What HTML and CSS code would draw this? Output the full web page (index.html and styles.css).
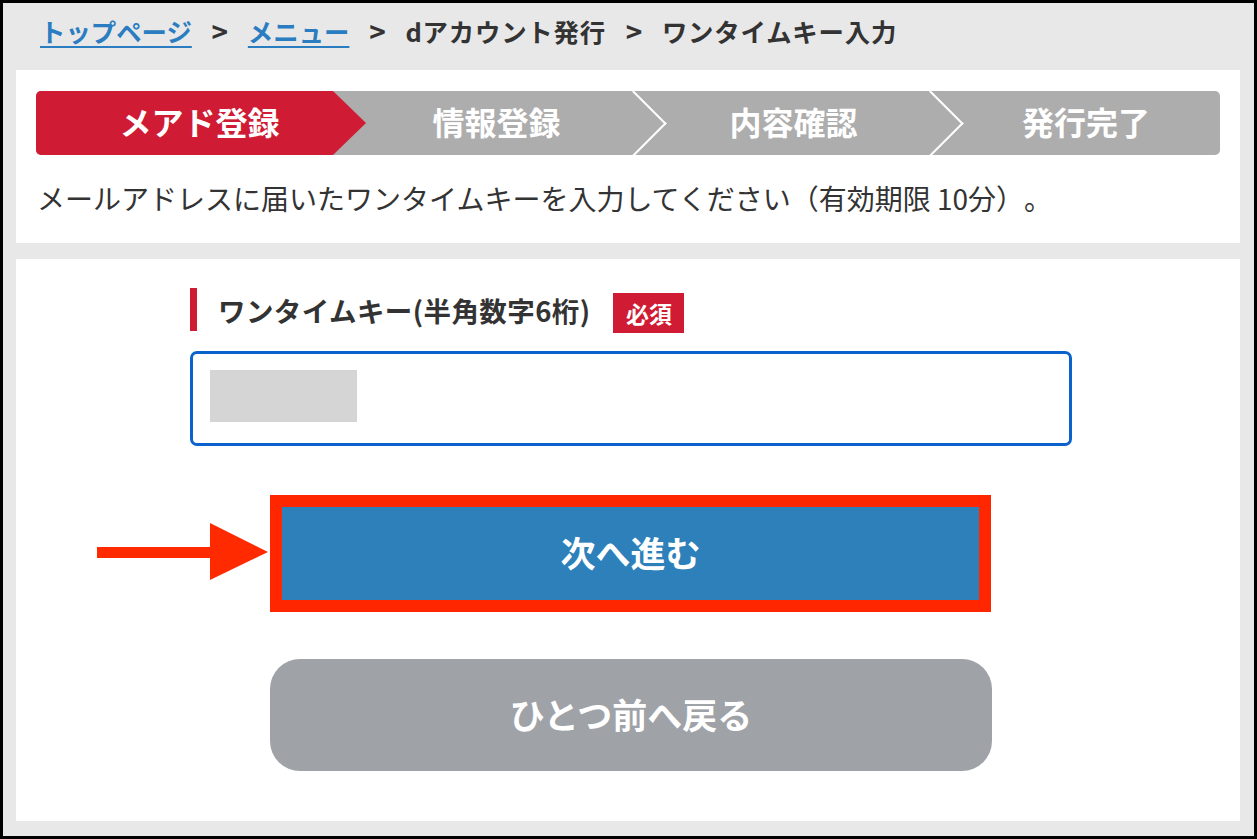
FILE: index.html
```html
<!DOCTYPE html>
<html lang="ja">
<head>
<meta charset="utf-8">
<title>ワンタイムキー入力</title>
<link rel="stylesheet" href="styles.css">
</head>
<body>
<div class="screen">
  <nav class="crumbs">
    <a class="crumb-link" href="#">トップページ</a><span class="sep">&gt;</span><a class="crumb-link" href="#">メニュー</a><span class="sep">&gt;</span><span class="crumb">dアカウント発行</span><span class="sep">&gt;</span><span class="crumb">ワンタイムキー入力</span>
  </nav>
  <section class="panel intro">
    <ol class="steps">
      <li class="step active">メアド登録</li>
      <li class="step chev">情報登録</li>
      <li class="step chev">内容確認</li>
      <li class="step">発行完了</li>
    </ol>
    <p class="desc">メールアドレスに届いたワンタイムキーを入力してください（有効期限 10分）。</p>
  </section>
  <section class="panel form">
    <div class="field">
      <div class="label"><span class="label-text">ワンタイムキー(半角数字6桁)</span><span class="badge">必須</span></div>
      <div class="input"><span class="mask"></span></div>
    </div>
    <div class="actions">
      <div class="highlight"><button class="btn next" type="button">次へ進む</button></div>
      <button class="btn back" type="button">ひとつ前へ戻る</button>
    </div>
    <svg class="pointer" width="172" height="58" viewBox="0 0 172 58" aria-hidden="true">
      <rect x="0" y="24" width="116" height="11" fill="#ff2a00"/>
      <polygon points="113,0 171,29 113,57" fill="#ff2a00"/>
    </svg>
  </section>
</div>
</body>
</html>
```
FILE: styles.css
```css
* { box-sizing: border-box; }
html, body { margin: 0; padding: 0; }
body {
  font-family: "Noto Sans CJK JP", "Noto Sans", sans-serif;
  color: #333;
  text-spacing-trim: space-all;
}
.screen {
  width: 1257px;
  height: 839px;
  border: 3px solid #000;
  background: #e8e8e8;
  padding: 0 14px 0 13px;
  display: flex;
  flex-direction: column;
}
.crumbs {
  height: 67px;
  padding: 10px 0 0 24px;
  font-size: 25.4px;
  font-weight: 700;
  line-height: 36px;
  display: flex;
  align-items: flex-start;
  white-space: nowrap;
}
.crumb-link {
  color: #2a7dc1;
  text-decoration: underline;
  text-decoration-thickness: 2px;
  text-underline-offset: 4px;
}
.crumb { color: #333; letter-spacing: 0.8px; }
.sep {
  display: inline-block;
  width: 56px;
  text-align: center;
  font-size: 28px;
  color: #333;
}
.panel {
  background: #fff;
}
.intro {
  height: 173px;
  padding: 21px 20px 0 20px;
}
.steps {
  list-style: none;
  margin: 0;
  padding: 0;
  height: 64px;
  display: flex;
  background: #adadad;
  border-radius: 5px;
  overflow: hidden;
}
.step {
  position: relative;
  width: 297px;
  flex: none;
  color: #fff;
  font-size: 32px;
  font-weight: 700;
  line-height: 60px;
  text-align: center;
  padding-left: 30px;
}
.step:last-child { width: auto; flex: 1; padding-left: 25px; }
.step.active {
  background: #cf1b33;
  z-index: 2;
}
.step.active::after {
  content: "";
  position: absolute;
  left: 100%;
  top: 0;
  border-top: 32px solid transparent;
  border-bottom: 32px solid transparent;
  border-left: 33px solid #cf1b33;
}
.step.chev::after {
  content: "";
  position: absolute;
  top: 9px;
  right: -27px;
  width: 45px;
  height: 45px;
  border-top: 2px solid #fff;
  border-right: 2px solid #fff;
  transform: rotate(45deg);
  z-index: 1;
}
.desc {
  margin: 23px 0 0 1px;
  font-size: 28px;
  line-height: 40px;
  color: #333;
  white-space: nowrap;
}
.form {
  position: relative;
  margin-top: 16px;
  height: 562px;
  padding-top: 29px;
}
.field {
  width: 882px;
  margin-left: 174px;
}
.label {
  display: flex;
  align-items: center;
  height: 43px;
  border-left: 7px solid #cf1b33;
  padding-left: 21px;
}
.label-text {
  font-size: 27.5px;
  font-weight: 700;
  color: #333;
  letter-spacing: 0.4px;
}
.badge {
  margin-left: 23px;
  margin-top: 6px;
  width: 71px;
  height: 40px;
  background: #cf1b33;
  color: #fff;
  font-size: 23px;
  font-weight: 700;
  line-height: 40px;
  text-align: center;
}
.input {
  margin-top: 20px;
  height: 95px;
  border: 3px solid #0b62cc;
  border-radius: 7px;
  padding: 16px 0 0 17px;
}
.mask {
  display: block;
  width: 147px;
  height: 52px;
  background: #d5d5d5;
}
.actions {
  margin: 49px 0 0 254px;
  width: 722px;
  display: flex;
  flex-direction: column;
  gap: 47px;
}
.highlight {
  width: 721px;
  height: 117px;
  border: 12px solid #ff2600;
}
.btn {
  display: block;
  width: 100%;
  border: 0;
  padding: 0 0 4px;
  font-family: inherit;
  font-weight: 700;
  font-size: 35px;
  color: #fff;
  cursor: pointer;
}
.next {
  height: 100%;
  background: #2d80b9;
}
.back {
  height: 112px;
  background: #9fa3a7;
  border-radius: 30px;
}
.pointer {
  position: absolute;
  left: 81px;
  top: 264px;
}
```
